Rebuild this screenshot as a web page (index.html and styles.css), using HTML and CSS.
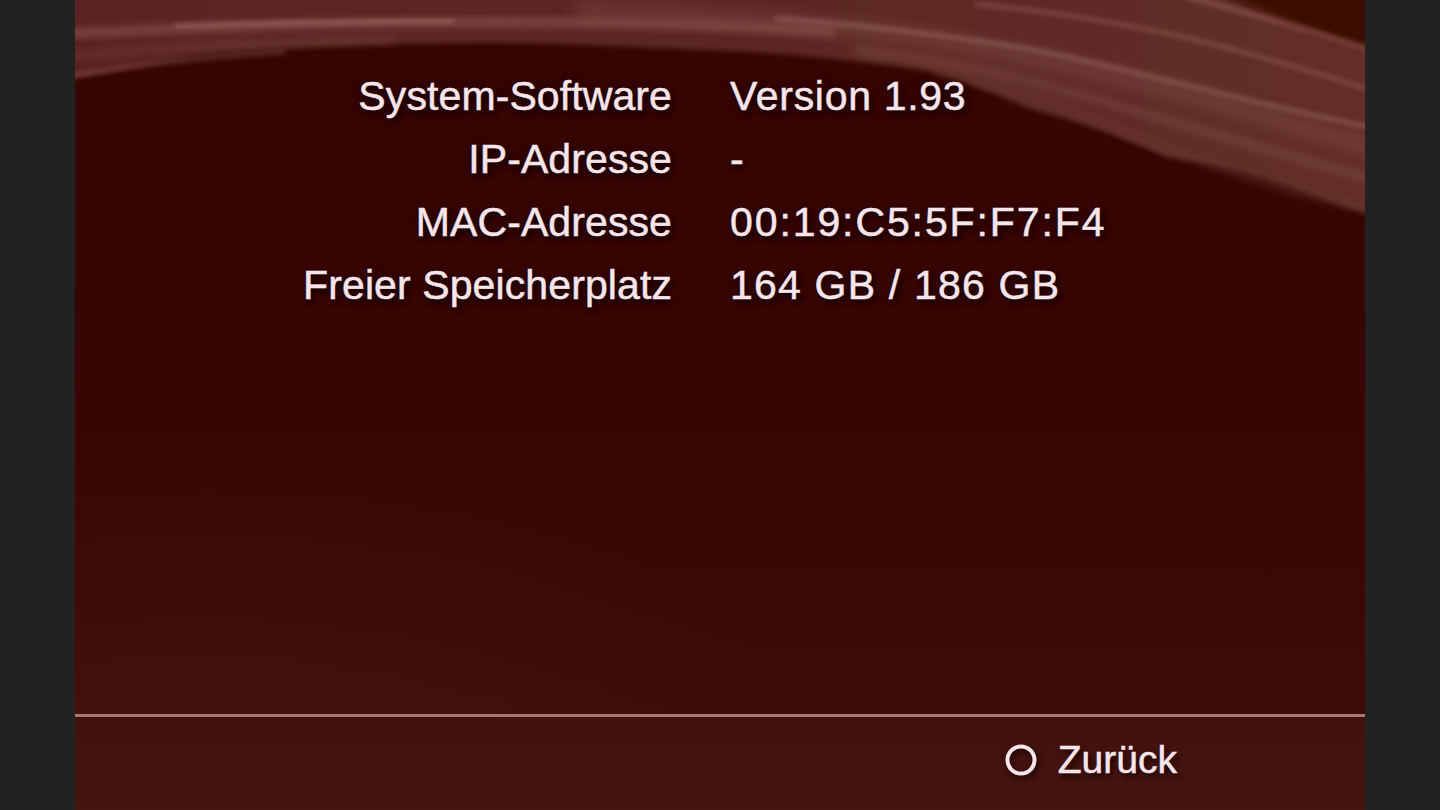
FILE: index.html
```html
<!DOCTYPE html>
<html lang="de">
<head>
<meta charset="utf-8">
<title>Systeminformationen</title>
<link rel="stylesheet" href="styles.css">
</head>
<body>
<div class="screen">
  <svg class="waves" width="1290" height="300" viewBox="0 0 1290 300" aria-hidden="true">
    <defs>
      <filter id="b8" x="-20%" y="-60%" width="140%" height="220%"><feGaussianBlur stdDeviation="8"/></filter>
      <filter id="b4" x="-20%" y="-60%" width="140%" height="220%"><feGaussianBlur stdDeviation="4"/></filter>
      <filter id="b2" x="-20%" y="-60%" width="140%" height="220%"><feGaussianBlur stdDeviation="2.5"/></filter>
      <linearGradient id="bandfill" x1="0" y1="0" x2="1" y2="0">
        <stop offset="0" stop-color="#5a2420"/>
        <stop offset="0.5" stop-color="#5c2722"/>
        <stop offset="1" stop-color="#633029"/>
      </linearGradient>
    </defs>
    <path d="M-40,-40 L1340,-40 L1340,230 L1290,213 C1220,190 1160,165 1092,157 C1040,135 1000,120 958,110 C910,90 870,72 825,67 C760,58 700,52 625,50 C540,46 470,43 400,43 C300,44 200,48 133,54 C80,62 30,74 -40,86 Z" fill="url(#bandfill)" filter="url(#b2)"/>
    <path d="M1100,-30 L1340,-30 L1340,62 C1260,40 1190,18 1100,-30 Z" fill="#3a0806" filter="url(#b4)"/>
    <path d="M1110,-4 C1180,14 1240,32 1300,52" stroke="#9a625b" stroke-width="5" fill="none" opacity="0.6" filter="url(#b2)"/>
    <path d="M-20,34 C120,28 260,22 400,22 C520,22 640,24 760,32" stroke="#a36c65" stroke-width="6" fill="none" opacity="0.7" filter="url(#b4)"/>
    <path d="M100,26 C180,23 270,21 380,21" stroke="#c08a83" stroke-width="3" fill="none" opacity="0.55" filter="url(#b2)"/>
    <path d="M-20,58 C80,46 200,42 320,40" stroke="#7e4a44" stroke-width="5" fill="none" opacity="0.55" filter="url(#b4)"/>
    <path d="M-20,78 C60,66 130,56 210,52" stroke="#8a564f" stroke-width="4" fill="none" opacity="0.55" filter="url(#b2)"/>
    <path d="M500,10 C650,14 760,24 860,40 C980,60 1100,90 1200,120 C1240,132 1270,140 1300,148" stroke="#8e5a53" stroke-width="10" fill="none" opacity="0.55" filter="url(#b8)"/>
    <path d="M700,18 C800,26 880,36 960,50 C1060,70 1160,100 1300,128" stroke="#a97770" stroke-width="4" fill="none" opacity="0.55" filter="url(#b2)"/>
    <path d="M780,50 C880,62 960,80 1050,108 C1140,134 1220,158 1300,180" stroke="#8c5a53" stroke-width="6" fill="none" opacity="0.55" filter="url(#b4)"/>
    <path d="M900,4 C1000,14 1080,28 1160,50 C1220,66 1260,78 1300,92" stroke="#a06a63" stroke-width="4" fill="none" opacity="0.5" filter="url(#b2)"/>
    <path d="M860,72 C940,86 1010,112 1090,148 C1170,178 1240,198 1300,210" stroke="#6e3a34" stroke-width="6" fill="none" opacity="0.6" filter="url(#b4)"/>
  </svg>

  <main class="info">
    <div class="label">System-Software</div>
    <div class="value">Version 1.93</div>
    <div class="label">IP-Adresse</div>
    <div class="value">-</div>
    <div class="label">MAC-Adresse</div>
    <div class="value mac">00:19:C5:5F:F7:F4</div>
    <div class="label">Freier Speicherplatz</div>
    <div class="value size">164 GB / 186 GB</div>
  </main>

  <div class="divider"></div>

  <footer class="footer">
    <div class="action">
      <svg class="circle-btn" width="34" height="34" viewBox="0 0 34 34" aria-hidden="true">
        <circle cx="17" cy="17" r="13.5" fill="none" stroke="#f6e6ec" stroke-width="4"/>
      </svg>
      <span class="action-text">Zurück</span>
    </div>
  </footer>
</div>
</body>
</html>
```

FILE: styles.css
```css
html, body {
  margin: 0;
  padding: 0;
  height: 100%;
}

body {
  background: #222222;
  display: flex;
  justify-content: center;
  overflow: hidden;
  font-family: "Liberation Sans", Arial, sans-serif;
}

.screen {
  position: relative;
  width: 1290px;
  height: 810px;
  overflow: hidden;
  display: flex;
  flex-direction: column;
  background:
    radial-gradient(ellipse 900px 500px at 10% 100%, rgba(80, 28, 20, 0.5), rgba(80, 28, 20, 0) 70%),
    linear-gradient(to bottom, #350403 0%, #380504 45%, #3c0806 75%, #420d0a 100%);
}

.waves {
  position: absolute;
  left: 0;
  top: 0;
  z-index: 0;
}

.info {
  position: relative;
  z-index: 1;
  flex: 1;
  display: grid;
  grid-template-columns: 597px auto;
  grid-auto-rows: 63px;
  column-gap: 58px;
  align-content: start;
  padding-top: 65px;
  font-size: 41px;
  line-height: 63px;
  color: #f6e6ec;
  -webkit-text-stroke: 0.5px #f6e6ec;
  text-shadow: 3px 4px 5px rgba(15, 0, 0, 0.85), 0 0 10px rgba(20, 0, 0, 0.6);
}

.label {
  text-align: right;
  white-space: nowrap;
  letter-spacing: 0.1px;
}

.value {
  white-space: nowrap;
  letter-spacing: 0.7px;
}

.value.mac {
  letter-spacing: 1.9px;
}

.value.size {
  letter-spacing: 1.2px;
}

.divider {
  position: relative;
  z-index: 1;
  height: 3px;
  background: #a97674;
  box-shadow: 0 2px 2px rgba(25, 0, 0, 0.7);
}

.footer {
  position: relative;
  z-index: 1;
  height: 93px;
  display: flex;
  justify-content: flex-end;
  align-items: center;
  padding-right: 188px;
  padding-bottom: 8px;
  box-sizing: border-box;
  background: linear-gradient(to bottom, #43110d 0%, #461510 100%);
}

.action {
  display: flex;
  align-items: center;
  gap: 20px;
}

.circle-btn {
  display: block;
  filter: drop-shadow(2px 3px 3px rgba(15, 0, 0, 0.85));
}

.action-text {
  font-size: 39px;
  line-height: 44px;
  color: #f6e6ec;
  -webkit-text-stroke: 0.5px #f6e6ec;
  text-shadow: 3px 4px 5px rgba(15, 0, 0, 0.85);
}
```
